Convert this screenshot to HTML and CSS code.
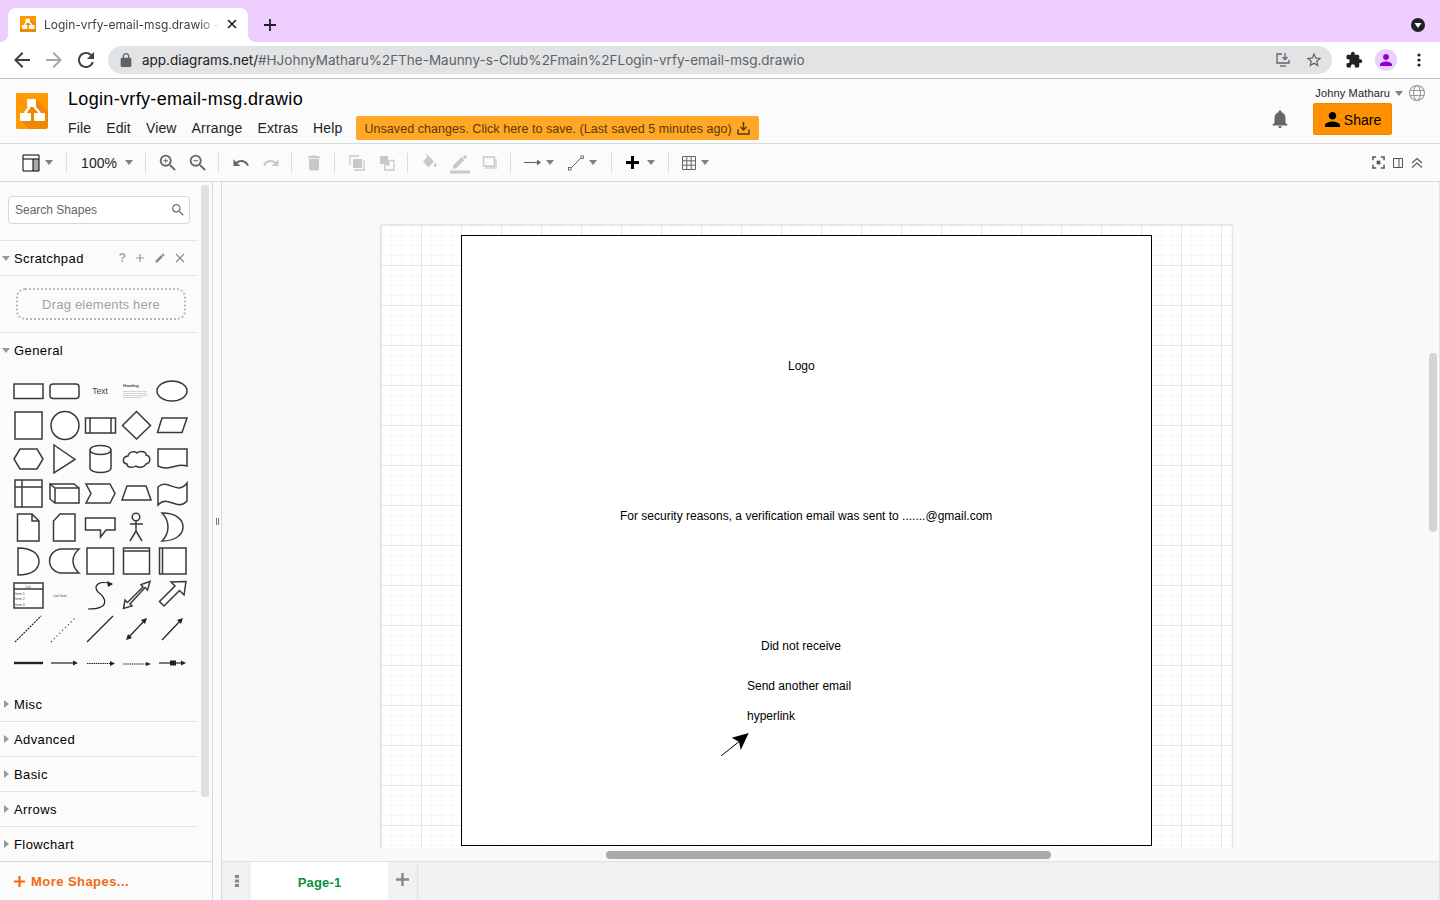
FILE: index.html
```html
<!DOCTYPE html>
<html lang="en">
<head>
<meta charset="UTF-8">
<meta name="viewport" content="width=device-width, initial-scale=1.0">
<title>Login-vrfy-email-msg.drawio - diagrams.net</title>
<link rel="stylesheet" href="styles.css">
</head>
<body>
<!-- browser chrome -->
<div class="tabstrip">
    <div class="tab">
        <svg class="favicon" width="16" height="16" viewBox="0 0 32 36" preserveAspectRatio="none"><rect width="32" height="36" fill="#f08705"/><polygon points="0,0 32,0 32,18 22,8 4,28 0,28" fill="#ff9a00"/><path d="M13.5 14L9 20M18.5 14L24 20" stroke="#fff" stroke-width="3"/><rect x="11" y="6" width="9" height="9" rx="1" fill="#fff"/><rect x="4" y="20" width="11" height="9" rx="1" fill="#fff"/><rect x="18" y="20" width="11" height="9" rx="1" fill="#fff"/></svg>
        <span class="tab-title">Login-vrfy-email-msg.drawio -</span>
        <svg class="tab-close" width="10" height="10" viewBox="0 0 10 10"><path d="M1 1L9 9M9 1L1 9" stroke="#222" stroke-width="1.7"/></svg>
    </div>
    <svg class="new-tab" width="12" height="12" viewBox="0 0 12 12"><path d="M6 0V12M0 6H12" stroke="#202124" stroke-width="1.8"/></svg>
    <svg class="tab-menu" width="14" height="14" viewBox="0 0 14 14"><circle cx="7" cy="7" r="7" fill="#202124"/><polygon points="3.5,5 10.5,5 7,10" fill="#fff"/></svg>
</div>
<div class="addressrow">
    <svg class="nav-icon" width="24" height="24" viewBox="0 0 24 24"><path fill="#3c4043" d="M20 11H7.83l5.59-5.59L12 4l-8 8 8 8 1.41-1.41L7.83 13H20v-2z"/></svg>
    <svg class="nav-icon" width="24" height="24" viewBox="0 0 24 24"><path fill="#a5a7aa" d="M4 11h12.17l-5.59-5.59L12 4l8 8-8 8-1.41-1.41L16.17 13H4v-2z"/></svg>
    <svg class="nav-icon" width="24" height="24" viewBox="0 0 24 24"><path fill="#3c4043" d="M17.65 6.35A7.958 7.958 0 0 0 12 4c-4.42 0-7.99 3.58-7.99 8s3.57 8 7.99 8c3.73 0 6.84-2.55 7.73-6h-2.08A5.99 5.99 0 0 1 12 18c-3.31 0-6-2.69-6-6s2.69-6 6-6c1.66 0 3.14.69 4.22 1.78L13 11h7V4l-2.35 2.35z"/></svg>
    <div class="omnibox">
        <svg class="lock" width="12" height="14" viewBox="4 1 16 21"><path fill="#5f6368" d="M18 8h-1V6c0-2.76-2.24-5-5-5S7 3.24 7 6v2H6c-1.1 0-2 .9-2 2v10c0 1.1.9 2 2 2h12c1.1 0 2-.9 2-2V10c0-1.1-.9-2-2-2zM9 6c0-1.66 1.34-3 3-3s3 1.34 3 3v2H9V6z"/></svg>
        <span class="url"><b class="host">app.diagrams.net/</b>#HJohnyMatharu%2FThe-Maunny-s-Club%2Fmain%2FLogin-vrfy-email-msg.drawio</span>
        <svg class="omni-icon" width="16" height="16" viewBox="0 0 16 16" fill="none" stroke="#5f6368" stroke-width="1.3"><path d="M7 2H2V11H14V8"/><path d="M5 14H11"/><path d="M10 1V7M7.5 5L10 7.5L12.5 5"/></svg>
        <svg class="omni-icon" width="18" height="18" viewBox="0 0 24 24"><path fill="#5f6368" d="M22 9.24l-7.19-.62L12 2 9.19 8.63 2 9.24l5.46 4.73L5.82 21 12 17.27 18.18 21l-1.63-7.03L22 9.24zM12 15.4l-3.76 2.27 1-4.28-3.32-2.88 4.38-.38L12 6.1l1.71 4.04 4.38.38-3.32 2.88 1 4.28L12 15.4z"/></svg>
    </div>
    <svg class="ext" width="18" height="18" viewBox="0 0 24 24"><path fill="#202124" d="M20.5 11H19V7c0-1.1-.9-2-2-2h-4V3.5C13 2.12 11.88 1 10.5 1S8 2.12 8 3.5V5H4c-1.1 0-1.99.9-1.99 2v3.8H3.5c1.49 0 2.7 1.21 2.7 2.7s-1.21 2.7-2.7 2.7H2V20c0 1.1.9 2 2 2h3.8v-1.5c0-1.49 1.21-2.7 2.7-2.7 1.49 0 2.7 1.21 2.7 2.7V22H17c1.1 0 2-.9 2-2v-4h1.5c1.38 0 2.5-1.12 2.5-2.5S21.88 11 20.5 11z"/></svg>
    <div class="avatar"><svg width="18" height="18" viewBox="0 0 24 24"><path fill="#8f00d6" d="M12 12c2.21 0 4-1.79 4-4s-1.79-4-4-4-4 1.79-4 4 1.79 4 4 4zm0 2c-2.67 0-8 1.34-8 4v2h16v-2c0-2.66-5.33-4-8-4z"/></svg></div>
    <svg class="kebab" width="4" height="14" viewBox="0 0 4 14"><circle cx="2" cy="2" r="1.6" fill="#202124"/><circle cx="2" cy="7" r="1.6" fill="#202124"/><circle cx="2" cy="12" r="1.6" fill="#202124"/></svg>
</div>

<!-- drawio header -->
<div class="appheader">
    <svg class="logo" width="32" height="36" viewBox="0 0 32 36"><rect width="32" height="36" rx="2" fill="#f08705"/><path d="M2 0H30Q32 0 32 2V18L20 6L5 28L13 36H2Q0 36 0 34V2Q0 0 2 0Z" fill="#ff9a00"/><path d="M13.5 14L9 20M18.5 14L24 20" stroke="#fff" stroke-width="2.5"/><rect x="11" y="6" width="9" height="8" rx="1" fill="#fff"/><rect x="4" y="20" width="11" height="8" rx="1" fill="#fff"/><rect x="18" y="20" width="11" height="8" rx="1" fill="#fff"/></svg>
    <div class="titlecol">
        <div class="doctitle">Login-vrfy-email-msg.drawio</div>
        <div class="menubar">
            <a class="menu">File</a>
            <a class="menu">Edit</a>
            <a class="menu">View</a>
            <a class="menu">Arrange</a>
            <a class="menu">Extras</a>
            <a class="menu">Help</a>
            <div class="unsaved">
                <span>Unsaved changes. Click here to save. (Last saved 5 minutes ago)</span>
                <svg width="13" height="13" viewBox="0 0 13 13" fill="none" stroke="#5a3c00" stroke-width="1.5"><path d="M6.5 0V8M3.5 5L6.5 8L9.5 5"/><path d="M1 7.5V12H12V7.5"/></svg>
            </div>
        </div>
    </div>
    <div class="rightcol">
        <div class="account">
            <span>Johny Matharu</span>
            <i class="caret"></i>
            <svg width="18" height="18" viewBox="0 0 18 18" fill="none" stroke="#9a9a9a" stroke-width="1.1"><circle cx="9" cy="9" r="7.5"/><ellipse cx="9" cy="9" rx="3.4" ry="7.5"/><path d="M2 6.5H16M2 11.5H16"/></svg>
        </div>
        <div class="sharerow">
            <svg class="bell" width="22" height="22" viewBox="0 0 24 24"><path fill="#666" d="M12 22c1.1 0 2-.9 2-2h-4c0 1.1.9 2 2 2zm6-6v-5c0-3.07-1.63-5.64-4.5-6.32V4c0-.83-.67-1.5-1.5-1.5s-1.5.67-1.5 1.5v.68C7.64 5.36 6 7.92 6 11v5l-2 2v1h16v-1l-2-2z"/></svg>
            <button class="share"><svg width="15" height="15" viewBox="4 4 16 16"><path fill="#000" d="M12 12c2.21 0 4-1.79 4-4s-1.79-4-4-4-4 1.79-4 4 1.79 4 4 4zm0 2c-2.67 0-8 1.34-8 4v2h16v-2c0-2.66-5.33-4-8-4z"/></svg><span>Share</span></button>
        </div>
    </div>
</div>

<!-- toolbar -->
<div class="toolbar">
    <div class="tool tool-view">
        <svg width="18" height="18" viewBox="0 0 18 18"><rect x="11" y="5" width="6" height="12" fill="#aaa"/><path d="M1 1H17V17H1ZM1 5H17M11 5V17" fill="none" stroke="#000" stroke-width="1"/></svg>
        <i class="caret"></i>
    </div>
    <i class="sep"></i>
    <div class="tool tool-zoom"><span>100%</span><i class="caret"></i></div>
    <i class="sep"></i>
    <div class="tool"><svg width="22" height="22" viewBox="0 0 24 24"><path fill="#666" d="M15.5 14h-.79l-.28-.27A6.471 6.471 0 0 0 16 9.5 6.5 6.5 0 1 0 9.5 16c1.61 0 3.09-.59 4.23-1.57l.27.28v.79l5 4.99L20.49 19l-4.99-5zm-6 0C7.01 14 5 11.99 5 9.5S7.01 5 9.5 5 14 7.01 14 9.5 11.99 14 9.5 14zM12 10h-2v2H9v-2H7V9h2V7h1v2h2v1z"/></svg></div>
    <div class="tool"><svg width="22" height="22" viewBox="0 0 24 24"><path fill="#666" d="M15.5 14h-.79l-.28-.27A6.471 6.471 0 0 0 16 9.5 6.5 6.5 0 1 0 9.5 16c1.61 0 3.09-.59 4.23-1.57l.27.28v.79l5 4.99L20.49 19l-4.99-5zm-6 0C7.01 14 5 11.99 5 9.5S7.01 5 9.5 5 14 7.01 14 9.5 11.99 14 9.5 14zM7 9h5v1H7z"/></svg></div>
    <i class="sep"></i>
    <div class="tool"><svg width="18" height="18" viewBox="0 0 24 24"><path fill="#666" d="M12.5 8c-2.65 0-5.05.99-6.9 2.6L2 7v9h9l-3.62-3.62c1.39-1.16 3.16-1.88 5.12-1.88 3.54 0 6.55 2.31 7.6 5.5l2.37-.78C21.08 11.03 17.15 8 12.5 8z"/></svg></div>
    <div class="tool"><svg width="18" height="18" viewBox="0 0 24 24"><path fill="#c8c8c8" d="M18.4 10.6C16.55 8.99 14.15 8 11.5 8c-4.65 0-8.58 3.03-9.96 7.22L3.9 16c1.05-3.19 4.05-5.5 7.6-5.5 1.95 0 3.73.72 5.12 1.88L13 16h9V7l-3.6 3.6z"/></svg></div>
    <i class="sep"></i>
    <div class="tool"><svg width="20" height="20" viewBox="0 0 24 24"><path fill="#c8c8c8" d="M6 19c0 1.1.9 2 2 2h8c1.1 0 2-.9 2-2V7H6v12zM19 4h-3.5l-1-1h-5l-1 1H5v2h14V4z"/></svg></div>
    <i class="sep"></i>
    <div class="tool"><svg width="16" height="16" viewBox="0 0 16 16"><path d="M1 10V1H10" fill="none" stroke="#c8c8c8" stroke-width="1.3"/><rect x="4" y="4" width="9" height="9" fill="#c8c8c8"/><path d="M14 6H15V15H6V14" fill="none" stroke="#c8c8c8" stroke-width="1.3"/></svg></div>
    <div class="tool"><svg width="16" height="16" viewBox="0 0 16 16"><rect x="1" y="1" width="8" height="8" fill="#c8c8c8"/><path d="M10.5 5.5H15V15H5.5V10.5" fill="none" stroke="#c8c8c8" stroke-width="1.3"/><rect x="5.5" y="5.5" width="5" height="5" fill="#c8c8c8"/></svg></div>
    <i class="sep"></i>
    <div class="tool"><svg width="18" height="18" viewBox="0 0 24 24"><path fill="#c8c8c8" d="M16.56 8.94L7.62 0 6.21 1.41l2.38 2.38-5.15 5.15c-.59.59-.59 1.54 0 2.12l5.5 5.5c.29.29.68.44 1.06.44s.77-.15 1.06-.44l5.5-5.5c.59-.58.59-1.53 0-2.12zM19 11.5s-2 2.17-2 3.5c0 1.1.9 2 2 2s2-.9 2-2c0-1.33-2-3.5-2-3.5z"/></svg></div>
    <div class="tool"><svg width="22" height="22" viewBox="0 0 22 22"><path fill="#c8c8c8" d="M4 13.5V16.5H7L15.5 8L12.5 5ZM17.8 5.7C18.1 5.4 18.1 4.9 17.8 4.6L16.4 3.2C16.1 2.9 15.6 2.9 15.3 3.2L13.7 4.8L16.2 7.3Z"/><rect x="1" y="18.5" width="20" height="3" fill="#c8c8c8"/></svg></div>
    <div class="tool"><svg width="16" height="16" viewBox="0 0 16 16"><rect x="3" y="4" width="12" height="10" fill="#dcdcdc"/><rect x="1.5" y="2" width="11" height="9" fill="#fbfbfb" stroke="#c8c8c8" stroke-width="1.4"/></svg></div>
    <i class="sep"></i>
    <div class="tool tool-wide">
        <svg width="17" height="9" viewBox="0 0 17 9"><path d="M0 4.5H14" stroke="#666" stroke-width="1.1"/><polygon points="13,1.5 17,4.5 13,7.5" fill="#666"/></svg>
        <i class="caret"></i>
    </div>
    <div class="tool tool-wide">
        <svg width="16" height="16" viewBox="0 0 16 16"><path d="M3 13L13 3" stroke="#666" stroke-width="1"/><rect x="0.5" y="12.5" width="2.5" height="2.5" fill="#fff" stroke="#555" stroke-width="0.8"/><rect x="13" y="1" width="2.5" height="2.5" fill="#fff" stroke="#555" stroke-width="0.8"/></svg>
        <i class="caret"></i>
    </div>
    <i class="sep"></i>
    <div class="tool tool-wide tool-plus">
        <svg width="13" height="13" viewBox="0 0 13 13"><path d="M6.5 0V13M0 6.5H13" stroke="#000" stroke-width="3"/></svg>
        <i class="caret"></i>
    </div>
    <i class="sep"></i>
    <div class="tool tool-wide">
        <svg width="14" height="14" viewBox="0 0 14 14" fill="none" stroke="#666" stroke-width="1"><path d="M.5.5H13.5V13.5H.5ZM.5 4.8H13.5M.5 9.2H13.5M4.8.5V13.5M9.2.5V13.5"/></svg>
        <i class="caret"></i>
    </div>
    <div class="tool-right">
        <svg width="13" height="13" viewBox="0 0 14 14" fill="none" stroke="#555" stroke-width="1.6"><path d="M1 4.5V1H4.5M9.5 1H13V4.5M13 9.5V13H9.5M4.5 13H1V9.5"/><rect x="5" y="5" width="4" height="4" fill="#555" stroke="none"/></svg>
        <svg width="12" height="12" viewBox="0 0 12 12" fill="none" stroke="#555" stroke-width="1"><path d="M1.5 1.5H10.5V10.5H1.5ZM7 1.5V10.5"/></svg>
        <svg width="12" height="12" viewBox="0 0 12 12" fill="none" stroke="#555" stroke-width="1.1"><path d="M1 6L6 1.5L11 6M1 10.5L6 6L11 10.5"/></svg>
    </div>
</div>

<div class="main">
    <!-- shapes sidebar -->
    <aside class="sidebar">
        <div class="sidebar-scroll">
            <div class="sidebar-inner">
                <div class="searchwrap">
                    <div class="search">
                        <span>Search Shapes</span>
                        <svg width="16" height="16" viewBox="0 0 24 24"><path fill="#777" d="M15.5 14h-.79l-.28-.27A6.471 6.471 0 0 0 16 9.5 6.5 6.5 0 1 0 9.5 16c1.61 0 3.09-.59 4.23-1.57l.27.28v.79l5 4.99L20.49 19l-4.99-5zm-6 0C7.01 14 5 11.99 5 9.5S7.01 5 9.5 5 14 7.01 14 9.5 11.99 14 9.5 14z"/></svg>
                    </div>
                </div>
                <div class="section-head section-first">
                    <i class="arrow-down"></i><span class="section-name">Scratchpad</span>
                    <div class="scratch-actions">
                        <span class="qmark">?</span>
                        <svg width="10" height="10" viewBox="0 0 10 10"><path d="M5 1V9M1 5H9" stroke="#999" stroke-width="1.2"/></svg>
                        <svg width="12" height="12" viewBox="0 0 24 24"><path fill="#888" d="M3 17.25V21h3.75L17.81 9.94l-3.75-3.75L3 17.25zM20.71 7.04c.39-.39.39-1.02 0-1.41l-2.34-2.34c-.39-.39-1.02-.39-1.41 0l-1.83 1.83 3.75 3.75 1.83-1.83z"/></svg>
                        <svg width="10" height="10" viewBox="0 0 10 10"><path d="M1 1L9 9M9 1L1 9" stroke="#888" stroke-width="1.1"/></svg>
                    </div>
                </div>
                <div class="scratch-body"><div class="dropzone">Drag elements here</div></div>
                <div class="section-head section-open"><i class="arrow-down"></i><span class="section-name">General</span></div>
                <svg class="shapes" width="198" height="319" viewBox="0 368 198 319" fill="#fff" stroke="#3a3a3a" stroke-width="1.5">
                    <rect x="14" y="384" width="29" height="14.5"/>
                    <rect x="50" y="384" width="29" height="14.5" rx="3"/>
                    <text class="sh-text" x="100" y="394" text-anchor="middle">Text</text>
                    <text class="sh-head" x="123" y="387">Heading</text>
                    <path class="sh-fine" d="M123 391.5H147M123 393.5H147M123 395.5H147M123 397.5H142"/>
                    <ellipse cx="172" cy="391" rx="15" ry="10"/>

                    <rect x="15" y="412" width="27" height="27"/>
                    <circle cx="65" cy="425.5" r="14"/>
                    <path d="M85.5 418H115.5V433H85.5ZM90 418V433M111 418V433"/>
                    <polygon points="136.5,411.5 150.5,425.5 136.5,439 122.5,425.5"/>
                    <polygon points="162,418 187,418 182,432.5 157.5,432.5"/>

                    <polygon points="14,459 20,449 37,449 43,459 37,469 20,469"/>
                    <polygon points="54,445 75,459.5 54,473"/>
                    <path d="M90 450C90 444 111 444 111 450V468C111 474 90 474 90 468ZM90 450C90 456 111 456 111 450"/>
                    <path d="M128 456C129 451 136 451 137 453C140 450 147 452 146 455C151 456 151 463 146 464C144 468 138 468 136 466C133 468 127 468 127 464C122 463 122 457 128 456Z"/>
                    <path d="M158 449H187V466C177 462 170 472 158 466Z"/>

                    <path d="M15 480H42V507H15ZM22 480V507M15 487H42"/>
                    <path d="M50 484L55 488H79V503H55L50 499ZM50 484H74L79 488M55 488V503"/>
                    <polygon points="86,484 110,484 115,493.5 110,503 86,503 91,493.5"/>
                    <polygon points="127,486 146,486 151,500 122,500"/>
                    <path d="M158 487C168 478 177 496 187 483V501C177 512 168 494 158 505Z"/>

                    <path d="M17.5 514H32L39 521V541H17.5ZM32 514V521H39"/>
                    <polygon points="60,514 75,514 75,541 53.5,541 53.5,521"/>
                    <polygon points="85.5,518 115,518 115,530 106,530 100.5,537 100.5,530 85.5,530"/>
                    <path d="M136 521V531M130 524H143M136 531L130 541M136 531L142 541"/>
                    <circle cx="136" cy="517" r="3.8"/>
                    <path d="M162 513C177 513 183 520 183 527C183 535 175 541 162 541C170 533 170 521 162 513Z"/>

                    <path d="M18 548C32 548 39 554 39 561.5C39 569 32 575 18 575Z"/>
                    <path d="M60 549H79C71 556 71 566 79 573H60C46 570 46 552 60 549Z"/>
                    <rect x="87" y="548" width="26.5" height="26"/>
                    <path d="M123.5 548H149.5V574H123.5ZM123.5 551H149.5"/>
                    <path d="M159.5 548H186V574H159.5ZM162.5 548V574"/>

                    <path d="M14 583H43V608H14ZM14 589H43"/>
                    <text class="sh-tiny" x="28" y="587.5" text-anchor="middle">List</text>
                    <text class="sh-tiny" x="15" y="594.5">Item 1</text>
                    <text class="sh-tiny" x="15" y="600">Item 2</text>
                    <text class="sh-tiny" x="15" y="606">Item 3</text>
                    <text class="sh-tiny" x="60" y="596.5" text-anchor="middle">List Item</text>
                    <path class="sh-open" d="M88 609C112 609 105 597 98 592C92 585 100 580 112 584"/>
                    <polygon class="sh-solid" points="113,584 107,581 108,587"/>
                    <polygon points="123.5,608.5 125,600 127.5,602.5 143,587 141,584.5 150,581.5 147.5,590 145,587.5 130,604 132,606"/>
                    <polygon points="186,581.5 184,595 179.5,590.5 164,606 159.5,601.5 175,586 171,582"/>

                    <path class="sh-open sh-dash" d="M15 642L41 616"/>
                    <path class="sh-open sh-dot" d="M51 642L76 617"/>
                    <path class="sh-open" d="M87 642L113 616"/>
                    <path class="sh-open" d="M128 638L145 620"/>
                    <polygon class="sh-solid" points="147,618 141,620 145,624"/>
                    <polygon class="sh-solid" points="126,640 132,638 128,634"/>
                    <path class="sh-open" d="M162 640L181 620"/>
                    <polygon class="sh-solid" points="183,618 177,620 181,624"/>

                    <path class="sh-open sh-thick" d="M14 663H43"/>
                    <path class="sh-open" d="M51 663H75"/>
                    <polygon class="sh-solid" points="78,663 73,660.5 73,665.5"/>
                    <path class="sh-open sh-dots" d="M87 663.5H112"/>
                    <polygon class="sh-solid" points="115,663.5 110,661 110,666"/>
                    <path class="sh-open sh-dots" d="M123 664H147"/>
                    <polygon class="sh-solid" points="151,664 146,662 146,666"/>
                    <path class="sh-open" d="M159 663H183"/>
                    <rect class="sh-solid" x="170" y="660.5" width="6" height="5"/>
                    <polygon class="sh-solid" points="186,663 181,660.5 181,665.5"/>
                </svg>
                <div class="section-head"><i class="arrow-right"></i><span class="section-name">Misc</span></div>
                <div class="section-head"><i class="arrow-right"></i><span class="section-name">Advanced</span></div>
                <div class="section-head"><i class="arrow-right"></i><span class="section-name">Basic</span></div>
                <div class="section-head"><i class="arrow-right"></i><span class="section-name">Arrows</span></div>
                <div class="section-head"><i class="arrow-right"></i><span class="section-name">Flowchart</span></div>
            </div>
            <div class="sidebar-thumb"></div>
        </div>
        <div class="more-shapes">
            <svg width="11" height="11" viewBox="0 0 11 11"><path d="M5.5 0V11M0 5.5H11" stroke="#f26a0f" stroke-width="2.2"/></svg>
            <span>More Shapes...</span>
        </div>
    </aside>

    <div class="splitter"><i class="grip"></i></div>

    <!-- drawing area -->
    <div class="workspace">
        <div class="viewport">
            <div class="page">
                <div class="diagram">
                    <span class="label label-logo">Logo</span>
                    <span class="label label-security">For security reasons, a verification email was sent to .......@gmail.com</span>
                    <span class="label label-notreceive">Did not receive</span>
                    <span class="label label-send">Send another email</span>
                    <span class="label label-hyperlink">hyperlink</span>
                    <svg class="edge" width="30" height="24" viewBox="0 0 30 24"><path d="M1.3 22.7L19 8.7" stroke="#000" stroke-width="1"/><polygon points="28.7,0 20.7,17 19,8.7 11.7,4.7" fill="#000"/></svg>
                </div>
            </div>
            <div class="vscroll"></div>
        </div>
        <div class="hscroll"><div class="hthumb"></div></div>
        <div class="pagebar">
            <div class="pagebar-menu"><svg width="4" height="12" viewBox="0 0 4 12"><rect x="0" y="0" width="4" height="3" fill="#888"/><rect x="0" y="4.5" width="4" height="3" fill="#888"/><rect x="0" y="9" width="4" height="3" fill="#888"/></svg></div>
            <div class="pagetab">Page-1</div>
            <div class="pagebar-add"><svg width="13" height="13" viewBox="0 0 13 13"><path d="M6.5 0V13M0 6.5H13" stroke="#888" stroke-width="2.4"/></svg></div>
        </div>
    </div>
</div>
</body>
</html>
```

FILE: styles.css
```css
* {
    box-sizing: border-box;
}
html, body {
    margin: 0;
    height: 100%;
    overflow: hidden;
}
body {
    width: 1440px;
    height: 900px;
    display: flex;
    flex-direction: column;
    font-family: "Liberation Sans", Arial, sans-serif;
    color: #000;
    background: #fbfbfb;
}

/* browser chrome */
.tabstrip {
    height: 42px;
    background: #eeceff;
    display: flex;
    padding: 8px 15px 0 8px;
}
.tab {
    width: 240px;
    height: 34px;
    background: #fff;
    border-radius: 8px 8px 0 0;
    display: flex;
    align-items: center;
    padding: 0 11px 2px 12px;
    position: relative;
}
.tab::before,
.tab::after {
    content: "";
    position: absolute;
    bottom: 0;
    width: 8px;
    height: 8px;
}
.tab::before {
    left: -8px;
    background: radial-gradient(circle at 0 0, transparent 8px, #fff 8px);
}
.tab::after {
    right: -8px;
    background: radial-gradient(circle at 100% 0, transparent 8px, #fff 8px);
}
.favicon {
    flex: none;
    margin-right: 8px;
}
.tab-title {
    font-family: Inter, sans-serif;
    font-size: 12px;
    color: #3c4043;
    white-space: nowrap;
    -webkit-mask-image: linear-gradient(to right, #000 155px, transparent 176px);
    mask-image: linear-gradient(to right, #000 155px, transparent 176px);
}
.tab-close {
    margin-left: auto;
}
.new-tab {
    margin: 11px 0 0 16px;
}
.tab-menu {
    margin: 10px 0 0 auto;
}
.addressrow {
    height: 37px;
    background: #fff;
    border-bottom: 1px solid #bdbdbd;
    display: flex;
    align-items: center;
    padding: 0 0 1px 10px;
}
.nav-icon {
    margin-right: 8px;
}
.omnibox {
    width: 1224px;
    height: 28px;
    margin-left: 2px;
    background: #e1e3e4;
    border-radius: 14px;
    display: flex;
    align-items: center;
    padding: 0 9px 0 12px;
}
.lock {
    margin-right: 10px;
}
.url {
    font-family: Inter, sans-serif;
    font-size: 13.5px;
    color: #5f6368;
    white-space: nowrap;
}
.host {
    font-weight: 400;
    color: #202124;
}
.omni-icon {
    margin-left: 14px;
}
.omni-icon:nth-of-type(2) {
    margin-left: auto;
}
.ext {
    margin-left: 13px;
}
.avatar {
    width: 22px;
    height: 22px;
    margin-left: 12px;
    border-radius: 50%;
    background: #eeceff;
    display: flex;
    align-items: center;
    justify-content: center;
}
.kebab {
    margin-left: 20px;
}

/* drawio header */
.appheader {
    height: 65px;
    background: #fbfbfb;
    border-bottom: 1px solid #dadada;
    display: flex;
    padding: 14px 0 0 16px;
}
.logo {
    flex: none;
    margin-right: 20px;
}
.titlecol {
    display: flex;
    flex-direction: column;
}
.doctitle {
    font-size: 18px;
    line-height: 22px;
    letter-spacing: 0.33px;
    margin-top: -5px;
}
.menubar {
    display: flex;
    align-items: center;
    margin-top: 6px;
    height: 24px;
}
.menu {
    font-size: 14px;
    letter-spacing: 0.15px;
    margin-right: 15px;
    color: #222;
}
.unsaved {
    width: 403px;
    height: 24px;
    margin-left: -1px;
    background: #ffa726;
    border-radius: 2px;
    display: flex;
    align-items: center;
    justify-content: space-between;
    padding: 1px 9px 0 8px;
    font-size: 12.5px;
    letter-spacing: 0.05px;
    color: #5a3c00;
    white-space: nowrap;
}
.rightcol {
    margin-left: auto;
    display: flex;
    flex-direction: column;
    align-items: flex-end;
}
.account {
    display: flex;
    align-items: center;
    gap: 4px;
    height: 18px;
    margin: -9px 14px 0 0;
    font-size: 11px;
    letter-spacing: 0.15px;
    color: #222;
}
.account .caret {
    margin: 0 1px;
}
.sharerow {
    display: flex;
    align-items: center;
    gap: 22px;
    margin: 1px 48px 0 0;
}
.share {
    width: 79px;
    height: 32px;
    padding: 1px 0 0 1px;
    background: #ff9000;
    border: 1px solid #f08705;
    border-radius: 2px;
    display: flex;
    align-items: center;
    justify-content: center;
    gap: 4px;
    font-family: "Liberation Sans", Arial, sans-serif;
    font-size: 14px;
    color: #000;
}
.caret {
    display: block;
    width: 0;
    height: 0;
    border-left: 4.5px solid transparent;
    border-right: 4.5px solid transparent;
    border-top: 5px solid #808080;
}

/* toolbar */
.toolbar {
    height: 38px;
    background: #fbfbfb;
    border-bottom: 1px solid #dadada;
    display: flex;
    align-items: center;
    padding-left: 14px;
}
.tool {
    width: 30px;
    height: 30px;
    display: flex;
    align-items: center;
    justify-content: center;
    flex: none;
}
.tool-view {
    width: 47px;
    gap: 5px;
    justify-content: flex-start;
    padding-left: 8px;
}
.tool-zoom {
    width: 66px;
    gap: 8px;
    font-size: 14px;
    color: #222;
}
.tool-wide {
    width: 44px;
    gap: 5px;
    justify-content: flex-start;
    padding-left: 6px;
}
.tool-plus {
    gap: 8px;
    padding-left: 7px;
}
.sep {
    width: 1px;
    height: 20px;
    margin: 0 7px 0 5px;
    background: #dcdcdc;
    flex: none;
}
.tool-right {
    margin-left: auto;
    display: flex;
    align-items: center;
    gap: 7px;
    padding-right: 17px;
}

/* main area */
.main {
    flex: 1;
    display: flex;
    min-height: 0;
}
.sidebar {
    width: 213px;
    border-right: 1px solid #dadada;
    display: flex;
    flex-direction: column;
    background: #fbfbfb;
}
.sidebar-scroll {
    flex: 1;
    display: flex;
    min-height: 0;
    overflow: hidden;
}
.sidebar-inner {
    width: 198px;
    flex: none;
}
.sidebar-thumb {
    width: 8px;
    height: 612px;
    margin: 3px 0 0 3px;
    background: #e0e0e0;
    border-radius: 3px;
}
.searchwrap {
    height: 59px;
    padding: 14px 0 0 8px;
    border-bottom: 1px solid #e4e4e4;
}
.search {
    width: 182px;
    height: 28px;
    background: #fff;
    border: 1px solid #d8d8d8;
    border-radius: 4px;
    display: flex;
    align-items: center;
    justify-content: space-between;
    padding: 0 3px 0 6px;
    font-size: 12px;
    color: #666;
}
.section-head {
    height: 35px;
    display: flex;
    align-items: center;
    padding-left: 14px;
    border-bottom: 1px solid #e4e4e4;
    position: relative;
}
.section-open {
    border-bottom: 0;
}
.section-name {
    font-size: 13px;
    letter-spacing: 0.4px;
    color: #000;
}
.arrow-down {
    position: absolute;
    left: 2px;
    top: 15px;
    border-left: 4px solid transparent;
    border-right: 4px solid transparent;
    border-top: 5px solid #999;
}
.arrow-right {
    position: absolute;
    left: 4px;
    top: 13px;
    border-top: 4px solid transparent;
    border-bottom: 4px solid transparent;
    border-left: 5px solid #999;
}
.scratch-actions {
    margin-left: auto;
    display: flex;
    align-items: center;
    gap: 9px;
    padding-right: 13px;
}
.qmark {
    font-size: 12px;
    font-weight: bold;
    color: #aaa;
}
.scratch-body {
    height: 57px;
    padding: 12px 0 0 16px;
    border-bottom: 1px solid #e4e4e4;
}
.dropzone {
    width: 170px;
    height: 32px;
    border: 2px dotted #bbb;
    border-radius: 9px;
    display: flex;
    align-items: center;
    justify-content: center;
    font-size: 13px;
    letter-spacing: 0.2px;
    color: #a2a2a2;
}
.shapes {
    display: block;
    margin-bottom: 0;
}
.shapes text {
    stroke: none;
    fill: #444;
    font-family: "Liberation Sans", Arial, sans-serif;
}
.sh-text {
    font-size: 8.5px;
}
.sh-head {
    font-size: 4px;
    font-weight: bold;
}
.sh-tiny {
    font-size: 3.5px;
}
.sh-fine {
    stroke-width: 0.4;
    stroke: #999;
}
.sh-open {
    fill: none;
    stroke: #222;
    stroke-width: 1.2;
}
.sh-solid {
    fill: #222;
    stroke: none;
}
.sh-dash {
    stroke-dasharray: 2 1;
}
.sh-dot {
    stroke-dasharray: 1 3;
}
.sh-dots {
    stroke-dasharray: 1.5 0.7;
}
.sh-thick {
    stroke-width: 2.4;
}
.more-shapes {
    height: 39px;
    border-top: 1px solid #dadada;
    display: flex;
    align-items: center;
    gap: 6px;
    padding-left: 14px;
    font-size: 13px;
    font-weight: bold;
    letter-spacing: 0.45px;
    color: #f26a0f;
}
.splitter {
    width: 9px;
    border-right: 1px solid #dadada;
    background: #fbfbfb;
    display: flex;
    align-items: center;
    justify-content: center;
    padding-bottom: 40px;
}
.grip {
    width: 3px;
    height: 7px;
    border-left: 1px solid #777;
    border-right: 1px solid #777;
}

/* drawing area */
.workspace {
    flex: 1;
    display: flex;
    flex-direction: column;
    min-width: 0;
    border-right: 1px solid #e2e2e2;
}
.viewport {
    height: 666px;
    flex: none;
    background: #f8f9fb;
    padding: 43px 0 0 159px;
    overflow: hidden;
    position: relative;
}
.page {
    width: 851px;
    height: 800px;
    box-shadow: 0 0 2px rgba(0, 0, 0, 0.25);
    background-color: #fff;
    background-image:
        linear-gradient(to right, #e6e6e6 1px, transparent 1px),
        linear-gradient(to bottom, #e6e6e6 1px, transparent 1px),
        linear-gradient(to right, #f7f7f7 1px, transparent 1px),
        linear-gradient(to bottom, #f7f7f7 1px, transparent 1px);
    background-size: 40px 40px, 40px 40px, 10px 10px, 10px 10px;
    position: relative;
}
.diagram {
    position: absolute;
    left: 80px;
    top: 10px;
    width: 691px;
    height: 611px;
    background: #fff;
    border: 1px solid #000;
}
.label {
    position: absolute;
    font-size: 12px;
    line-height: 14px;
    white-space: nowrap;
    color: #000;
}
.label-logo {
    left: 326px;
    top: 123px;
}
.label-security {
    left: 158px;
    top: 273px;
}
.label-notreceive {
    left: 299px;
    top: 403px;
}
.label-send {
    left: 285px;
    top: 443px;
}
.label-hyperlink {
    left: 285px;
    top: 473px;
}
.edge {
    position: absolute;
    left: 258px;
    top: 497px;
}
.vscroll {
    position: absolute;
    left: 1207px;
    top: 171px;
    width: 8px;
    height: 179px;
    background: #d4d4d4;
    border-radius: 4px;
}
.hscroll {
    height: 13px;
    flex: none;
    background: #f8f9fb;
    padding: 3px 0 0 384px;
}
.hthumb {
    width: 445px;
    height: 8px;
    background: #aaa;
    border-radius: 4px;
}
.pagebar {
    flex: 1;
    display: flex;
    background: #f0f1f3;
    border-top: 1px solid #dfe0e2;
}
.pagebar-menu {
    width: 29px;
    display: flex;
    align-items: center;
    justify-content: center;
}
.pagetab {
    width: 137px;
    background: #fff;
    display: flex;
    align-items: center;
    justify-content: center;
    font-size: 13px;
    font-weight: bold;
    letter-spacing: 0.15px;
    color: #0a8f3c;
    padding-top: 2px;
}
.pagebar-add {
    width: 30px;
    border-right: 1px solid #dfe0e2;
    display: flex;
    align-items: center;
    justify-content: center;
    padding-bottom: 3px;
}
```
